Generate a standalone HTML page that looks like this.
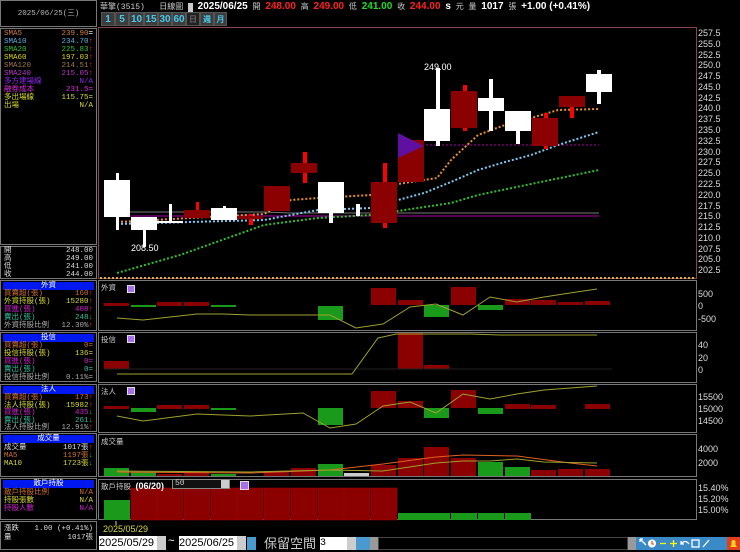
<!DOCTYPE html>
<html><head><meta charset="utf-8">
<style>
*{margin:0;padding:0;box-sizing:border-box}
body{width:740px;height:550px;background:#000;overflow:hidden;position:relative;font-family:"Liberation Mono","Noto Sans CJK TC",monospace;font-size:7.5px;color:#ddd}
.a{position:absolute}
.box{position:absolute;border:1px solid #777;left:0;width:97px}
.row{position:absolute;left:3px;right:3px;height:8px;line-height:8px;white-space:nowrap;overflow:visible}
.row span{position:absolute;right:0}
.hd{position:absolute;left:2px;right:2px;height:8px;background:#0018f0;color:#fff;text-align:center;line-height:8px;font-size:7.5px}
.up{color:#f22}.dn{color:#2c2}
.tab{position:absolute;top:12px;height:14px;background:#3c3c3c;color:#48c8e8;font:bold 10px "Liberation Sans",sans-serif;text-align:center;line-height:14px;border:1px solid #555}
.ax{position:absolute;left:698px;font:9px "Liberation Sans",sans-serif;color:#ddd}
</style></head><body>
<div class="box" style="top:0;height:27px;text-align:center;line-height:27px;color:#bbb">2025/06/25(三)</div>
<div class="box" style="top:28px;height:217px">
<div class="row" style="top:1px;color:#d08038">SMA5<span>239.90<b style="color:#ddd">=</b></span></div>
<div class="row" style="top:9px;color:#58b0e0">SMA10<span>234.70<b class="up">↑</b></span></div>
<div class="row" style="top:17px;color:#30c030">SMA20<span>225.83<b class="up">↑</b></span></div>
<div class="row" style="top:25px;color:#d8d800">SMA60<span>197.03<b class="up">↑</b></span></div>
<div class="row" style="top:33px;color:#a07848">SMA120<span>214.51<b class="up">↑</b></span></div>
<div class="row" style="top:41px;color:#b838c8">SMA240<span>215.05<b class="up">↑</b></span></div>
<div class="row" style="top:49px;color:#8828e8">多方建場線<span>N/A</span></div>
<div class="row" style="top:57px;color:#e028e0">融券成本<span>231.5=</span></div>
<div class="row" style="top:65px;color:#d8d830">多出場線<span>115.75=</span></div>
<div class="row" style="top:73px;color:#d8d830">出場<span>N/A</span></div>
</div>
<div class="box" style="top:246px;height:33px">
<div class="row" style="top:0">開<span>248.00</span></div>
<div class="row" style="top:8px">高<span>249.00</span></div>
<div class="row" style="top:16px">低<span>241.00</span></div>
<div class="row" style="top:24px">收<span>244.00</span></div>
</div>
<div class="box" style="top:280px;height:51px"><div class="hd" style="top:1px">外資</div>
<div class="row" style="top:9px;color:#d07030">買賣超(張)<span>160<b class="up">↑</b></span></div>
<div class="row" style="top:17px;color:#d8d830">外資持股(張)<span>15280<b class="up">↑</b></span></div>
<div class="row" style="top:25px;color:#d020d0">買進(張)<span>408<b class="up">↑</b></span></div>
<div class="row" style="top:33px;color:#30c0a0">賣出(張)<span>248<b class="dn">↓</b></span></div>
<div class="row" style="top:41px;color:#aaa">外資持股比例<span>12.30%<b class="up">↑</b></span></div>
</div>
<div class="box" style="top:332px;height:50px"><div class="hd" style="top:1px">投信</div>
<div class="row" style="top:9px;color:#d07030">買賣超(張)<span>0=</span></div>
<div class="row" style="top:17px;color:#d8d830">投信持股(張)<span>136=</span></div>
<div class="row" style="top:25px;color:#d020d0">買進(張)<span>0=</span></div>
<div class="row" style="top:33px;color:#30c0a0">賣出(張)<span>0=</span></div>
<div class="row" style="top:41px;color:#aaa">投信持股比例<span>0.11%=</span></div>
</div>
<div class="box" style="top:384px;height:48px"><div class="hd" style="top:1px">法人</div>
<div class="row" style="top:9px;color:#d07030">買賣超(張)<span>173<b class="up">↑</b></span></div>
<div class="row" style="top:16.5px;color:#d8d830">法人持股(張)<span>15982<b class="up">↑</b></span></div>
<div class="row" style="top:24px;color:#d020d0">買進(張)<span>435<b class="dn">↓</b></span></div>
<div class="row" style="top:31.5px;color:#30c0a0">賣出(張)<span>261<b class="dn">↓</b></span></div>
<div class="row" style="top:39px;color:#aaa">法人持股比例<span>12.91%<b class="up">↑</b></span></div>
</div>
<div class="box" style="top:433px;height:44px"><div class="hd" style="top:1px">成交量</div>
<div class="row" style="top:10px;color:#ddd">成交量<span>1017張<b class="up">↑</b></span></div>
<div class="row" style="top:18px;color:#d07030">MA5<span>1197張<b class="dn">↓</b></span></div>
<div class="row" style="top:26px;color:#d8d830">MA10<span>1723張<b class="dn">↓</b></span></div>
</div>
<div class="box" style="top:478px;height:42px"><div class="hd" style="top:1px">散戶持股</div>
<div class="row" style="top:10px;color:#d07030">散戶持股比例<span>N/A</span></div>
<div class="row" style="top:18px;color:#d8d830">持股張數<span>N/A</span></div>
<div class="row" style="top:26px;color:#d020d0">持股人數<span>N/A</span></div>
</div>
<div class="box" style="top:521px;height:29px">
<div class="row" style="top:3px">漲跌<span>1.00 (+0.41%)</span></div>
<div class="row" style="top:12px">量<span>1017張</span></div>
</div>

<div class="a" style="left:100px;top:1px;white-space:nowrap;font-size:8px;color:#ccc">華擎(3515)&nbsp;&nbsp;&nbsp;日線圖 <span style="background:#ccc">&nbsp;</span> <b style="font:bold 10px 'Liberation Sans',sans-serif;color:#fff">2025/06/25</b> 開 <b style="font:bold 10px 'Liberation Sans';color:#f22">248.00</b> 高 <b style="font:bold 10px 'Liberation Sans';color:#f22">249.00</b> 低 <b style="font:bold 10px 'Liberation Sans';color:#2d2">241.00</b> 收 <b style="font:bold 10px 'Liberation Sans';color:#f22">244.00</b> <b style="font:bold 10px 'Liberation Sans';color:#fff">s</b> 元 量 <b style="font:bold 10px 'Liberation Sans';color:#fff">1017</b> 張 <b style="font:bold 10px 'Liberation Sans';color:#fff">+1.00 (+0.41%)</b></div>
<div class="tab" style="left:101px;width:14px">1</div>
<div class="tab" style="left:115px;width:14px">5</div>
<div class="tab" style="left:129px;width:15px">10</div>
<div class="tab" style="left:144px;width:14px">15</div>
<div class="tab" style="left:158px;width:14px">30</div>
<div class="tab" style="left:172px;width:14px">60</div>
<div class="tab" style="left:186px;width:14px;background:#222;color:#666;font-size:8px">日</div>
<div class="tab" style="left:200px;width:14px;font-size:8px">週</div>
<div class="tab" style="left:214px;width:13px;font-size:8px">月</div>

<svg class="a" style="left:0;top:0" width="740" height="550">
<g fill="none" stroke="#777" stroke-width="1">
<rect x="98.5" y="27.5" width="598" height="251" stroke="#845"/>
<rect x="98.5" y="280.5" width="598" height="50"/>
<rect x="98.5" y="332.5" width="598" height="50"/>
<rect x="98.5" y="384.5" width="598" height="48"/>
<rect x="98.5" y="434.5" width="598" height="42"/>
<rect x="98.5" y="479.5" width="598" height="40"/>
</g>
<g fill="none" stroke-width="2" stroke-dasharray="2 2">
<polyline stroke="#777" stroke-dasharray="none" stroke-width="1" points="117,212 264,212 291,213 599,213"/>
<polyline stroke="#a0a" stroke-dasharray="none" stroke-width="1" points="117,216 599,216"/>
<polyline stroke="#a0a" stroke-width="1" points="398,145 599,145"/>
<polyline stroke="#30c030" points="117,273 180,255 264,225 318,218 371,215 398,211 451,203 478,195 531,184 599,170"/>
<polyline stroke="#7cc8f0" points="117,224 264,220 318,210 371,208 398,200 424,193 451,182 478,170 505,162 531,155 558,145 599,132"/>
<polyline stroke="#e8902a" points="117,222 264,214 291,200 318,198 371,195 398,184 437,178 451,160 478,135 505,125 531,118 558,110 599,109"/>
<polyline stroke="#d8b040" points="100,278 696,278"/>
</g>
<g>
<rect x="116" y="173" width="3" height="57" fill="#fff"/><rect x="104" y="180" width="26" height="37" fill="#fff"/>
<rect x="143" y="217" width="3" height="30" fill="#fff"/><rect x="131" y="217" width="26" height="13" fill="#fff"/>
<rect x="169" y="204" width="3" height="18" fill="#fff"/><rect x="157" y="221" width="26" height="2" fill="#fff"/>
<rect x="196" y="202" width="3" height="10" fill="#f00"/><rect x="184" y="210" width="26" height="8" fill="#8b0000"/>
<rect x="223" y="206" width="3" height="14" fill="#fff"/><rect x="211" y="208" width="26" height="12" fill="#fff"/>
<rect x="249" y="214" width="4" height="11" fill="#f00"/><rect x="237" y="216" width="26" height="3" fill="#8b0000"/>
<rect x="264" y="186" width="26" height="25" fill="#8b0000"/>
<rect x="303" y="152" width="4" height="31" fill="#f00"/><rect x="291" y="163" width="26" height="10" fill="#8b0000"/>
<rect x="329" y="182" width="4" height="41" fill="#fff"/><rect x="318" y="182" width="26" height="31" fill="#fff"/>
<rect x="356" y="204" width="4" height="12" fill="#fff"/>
<rect x="383" y="163" width="4" height="65" fill="#f00"/><rect x="371" y="182" width="26" height="41" fill="#8b0000"/>
<rect x="398" y="140" width="26" height="42" fill="#8b0000"/>
<polygon points="398,133 424,146 398,158" fill="#6010a0"/>
<rect x="436" y="68" width="4" height="78" fill="#fff"/><rect x="424" y="109" width="26" height="32" fill="#fff"/>
<rect x="463" y="85" width="4" height="46" fill="#f00"/><rect x="451" y="91" width="26" height="37" fill="#8b0000"/>
<rect x="489" y="79" width="4" height="52" fill="#fff"/><rect x="478" y="98" width="26" height="13" fill="#fff"/>
<rect x="516" y="111" width="4" height="33" fill="#fff"/><rect x="505" y="111" width="26" height="20" fill="#fff"/>
<rect x="544" y="113" width="4" height="36" fill="#f00"/><rect x="532" y="118" width="26" height="28" fill="#8b0000"/>
<rect x="570" y="107" width="4" height="11" fill="#f00"/><rect x="559" y="96" width="26" height="11" fill="#8b0000"/>
<rect x="597" y="70" width="4" height="34" fill="#fff"/><rect x="586" y="74" width="26" height="18" fill="#fff"/>
</g>
<text x="424" y="70" fill="#fff" font-family="Liberation Sans" font-size="9">249.00</text>
<text x="131" y="251" fill="#fff" font-family="Liberation Sans" font-size="9">208.50</text>
<g fill="#8b0000"><rect x="104" y="303" width="25" height="3"/><rect x="157" y="302" width="25" height="4"/><rect x="184" y="302" width="25" height="4"/><rect x="371" y="288" width="25" height="17"/><rect x="398" y="300" width="25" height="5"/><rect x="451" y="287" width="25" height="18"/><rect x="505" y="299" width="25" height="6"/><rect x="531" y="300" width="25" height="5"/><rect x="558" y="302" width="25" height="3"/><rect x="585" y="301" width="25" height="4"/></g>
<g fill="#1a9a1a"><rect x="131" y="305" width="25" height="2"/><rect x="211" y="305" width="25" height="2"/><rect x="318" y="306" width="25" height="14"/><rect x="424" y="305" width="25" height="12"/><rect x="478" y="305" width="25" height="5"/></g>
<polyline fill="none" stroke="#a0a030" points="117,318 143,320 170,317 197,314 223,314 250,315 303,315 330,315 356,328 383,324 410,307 436,304 463,315 490,297 517,302 544,297 570,293 597,289"/>
<rect x="104" y="361" width="25" height="8" fill="#8b0000"/><rect x="398" y="333" width="25" height="36" fill="#8b0000"/><rect x="424" y="365" width="25" height="4" fill="#8b0000"/>
<line x1="104" y1="369" x2="612" y2="369" stroke="#222"/>
<polyline fill="none" stroke="#a0a030" points="117,374 352,374 378,338 396,334 470,334 500,335 597,335"/>
<g fill="#8b0000"><rect x="104" y="406" width="25" height="3"/><rect x="157" y="405" width="25" height="4"/><rect x="184" y="405" width="25" height="4"/><rect x="371" y="391" width="25" height="17"/><rect x="398" y="401" width="25" height="7"/><rect x="451" y="390" width="25" height="18"/><rect x="505" y="404" width="25" height="5"/><rect x="531" y="405" width="25" height="4"/><rect x="585" y="404" width="25" height="5"/></g>
<g fill="#1a9a1a"><rect x="131" y="408" width="25" height="4"/><rect x="211" y="408" width="25" height="2"/><rect x="318" y="408" width="25" height="17"/><rect x="424" y="408" width="25" height="10"/><rect x="478" y="408" width="25" height="6"/></g>
<polyline fill="none" stroke="#a0a030" points="117,416 143,421 197,414 250,416 303,413 330,428 356,424 383,406 410,402 436,413 463,394 490,399 517,394 544,390 597,386"/>
<g fill="#8b0000"><rect x="157" y="474" width="25" height="2"/><rect x="184" y="472" width="25" height="4"/><rect x="264" y="471" width="25" height="5"/><rect x="291" y="468" width="25" height="8"/><rect x="371" y="465" width="25" height="11"/><rect x="398" y="458" width="25" height="18"/><rect x="424" y="447" width="25" height="29"/><rect x="451" y="458" width="25" height="18"/><rect x="531" y="470" width="25" height="6"/><rect x="558" y="469" width="25" height="7"/><rect x="585" y="469" width="25" height="7"/></g>
<g fill="#1a9a1a"><rect x="104" y="468" width="25" height="8"/><rect x="131" y="472" width="25" height="4"/><rect x="211" y="474" width="25" height="2"/><rect x="318" y="464" width="25" height="12"/><rect x="478" y="462" width="25" height="14"/><rect x="505" y="467" width="25" height="9"/></g>
<rect x="344" y="473" width="25" height="3" fill="#ccc"/>
<polyline fill="none" stroke="#e06020" points="117,472 250,473 330,470 383,464 436,457 463,455 517,456 570,463 597,466"/>
<polyline fill="none" stroke="#a0a030" points="117,471 250,472 330,470 383,471 436,463 463,461 490,461 517,459 544,462 597,463"/>
<rect x="104" y="500" width="26" height="20" fill="#1a9a1a"/>
<g fill="#8b0000" stroke="#a00" stroke-width="0.5"><rect x="131" y="488" width="26" height="32"/><rect x="157" y="488" width="26" height="32"/><rect x="184" y="488" width="26" height="32"/><rect x="211" y="488" width="26" height="32"/><rect x="237" y="488" width="26" height="32"/><rect x="264" y="488" width="26" height="32"/><rect x="291" y="488" width="26" height="32"/><rect x="318" y="488" width="26" height="32"/><rect x="344" y="488" width="26" height="32"/><rect x="371" y="488" width="26" height="32"/></g>
<g fill="#1a9a1a"><rect x="398" y="513" width="26" height="7"/><rect x="424" y="513" width="26" height="7"/><rect x="451" y="513" width="26" height="7"/><rect x="478" y="513" width="26" height="7"/><rect x="505" y="513" width="26" height="7"/></g>
<line x1="116" y1="521" x2="116" y2="525" stroke="#ccc"/>
<rect x="636" y="537" width="104" height="13" fill="#3a8ac8"/>
<g stroke="#fff" stroke-width="1.3" fill="none">
<path d="M640 539 L646 545 M640 539 h3 M640 539 v3"/>
<circle cx="652" cy="543.5" r="4" fill="#fff" stroke="none"/><path d="M652 541 v3 h2" stroke="#e06020"/>
<path d="M660 543.5 h6" stroke="#ff0"/>
<path d="M670 543.5 h7 M673.5 540 v7" stroke="#ff0"/>
<path d="M681 541 v3 h3 M681 544 q4 -5 8 0"/>
<rect x="692" y="540" width="7" height="7"/>
<path d="M703 547 L709 540"/>
</g>
<rect x="727" y="537" width="13" height="13" fill="#e04020"/>
<path d="M730 547 h7 l-1.5 -2 v-3 a2 2 0 0 0 -4 0 v3 z" fill="#ffd020"/>
</svg>
<div class="a" style="left:101px;top:282px;color:#ccc">外資</div>
<div class="a" style="left:101px;top:334px;color:#ccc">投信</div>
<div class="a" style="left:101px;top:386px;color:#ccc">法人</div>
<div class="a" style="left:101px;top:436px;color:#ccc">成交量</div>
<div class="a" style="left:101px;top:481px;color:#ccc">散戶持股 <b style="font:bold 9px 'Liberation Sans';color:#fff">(06/20)</b></div>
<div class="a" style="left:172px;top:479px;width:58px;height:10px;border:1px solid #888;background:#111;color:#ccc;font-size:8px;line-height:8px;padding-left:2px">50<span style="position:absolute;right:0;top:0;width:8px;height:8px;background:#ccc"></span></div>
<div class="a" style="left:240px;top:481px;width:9px;height:9px;background:#a870e8;border:1px solid #ddd"></div>
<div class="a" style="left:127px;top:285px;width:8px;height:8px;background:#a870e8;border:1px solid #ddd"></div>
<div class="a" style="left:127px;top:335px;width:8px;height:8px;background:#a870e8;border:1px solid #ddd"></div>
<div class="a" style="left:127px;top:387px;width:8px;height:8px;background:#a870e8;border:1px solid #ddd"></div>
<div class="ax" style="top:28px;line-height:10.78px">257.5<br>255.0<br>252.5<br>250.0<br>247.5<br>245.0<br>242.5<br>240.0<br>237.5<br>235.0<br>232.5<br>230.0<br>227.5<br>225.0<br>222.5<br>220.0<br>217.5<br>215.0<br>212.5<br>210.0<br>207.5<br>205.0<br>202.5</div>
<div class="ax" style="top:289px">500</div><div class="ax" style="top:301px">0</div><div class="ax" style="top:314px">-500</div>
<div class="ax" style="top:340px">40</div><div class="ax" style="top:353px">20</div><div class="ax" style="top:365px">0</div>
<div class="ax" style="top:392px">15500</div><div class="ax" style="top:404px">15000</div><div class="ax" style="top:416px">14500</div>
<div class="ax" style="top:444px">4000</div><div class="ax" style="top:458px">2000</div>
<div class="ax" style="top:483px">15.40%</div><div class="ax" style="top:494px">15.20%</div><div class="ax" style="top:505px">15.00%</div>
<div class="a" style="left:103px;top:524px;font:9px 'Liberation Sans',sans-serif;color:#d8d840">2025/05/29</div>
<div class="a" style="left:99px;top:536px;width:67px;height:14px;background:#fff;color:#000;font:11px 'Liberation Sans',sans-serif;line-height:14px;overflow:hidden">2025/05/29<span style="position:absolute;right:0;top:0;width:9px;height:14px;background:#ccc"></span></div>
<div class="a" style="left:168px;top:536px;color:#fff;font-size:11px">~</div>
<div class="a" style="left:179px;top:536px;width:67px;height:14px;background:#fff;color:#000;font:11px 'Liberation Sans',sans-serif;line-height:14px;overflow:hidden">2025/06/25<span style="position:absolute;right:0;top:0;width:9px;height:14px;background:#ccc"></span></div>
<div class="a" style="left:247px;top:537px;width:9px;height:13px;background:#4a9ad0"></div>
<div class="a" style="left:264px;top:535px;color:#ccc;font:13px 'Noto Sans CJK TC',sans-serif;line-height:15px">保留空間</div>
<div class="a" style="left:320px;top:537px;width:36px;height:13px;background:#fff;color:#000;font-size:10px;line-height:13px">3<span style="position:absolute;right:0;top:0;width:9px;height:13px;background:#ccc"></span></div>
<div class="a" style="left:356px;top:537px;width:14px;height:13px;background:#4a9ad0"></div>
<div class="a" style="left:370px;top:537px;width:8px;height:13px;background:#999"></div>
<div class="a" style="left:378px;top:537px;width:250px;height:13px;background:#000;border:1px solid #444"></div>
<div class="a" style="left:628px;top:537px;width:8px;height:13px;background:#999"></div>
</body></html>
